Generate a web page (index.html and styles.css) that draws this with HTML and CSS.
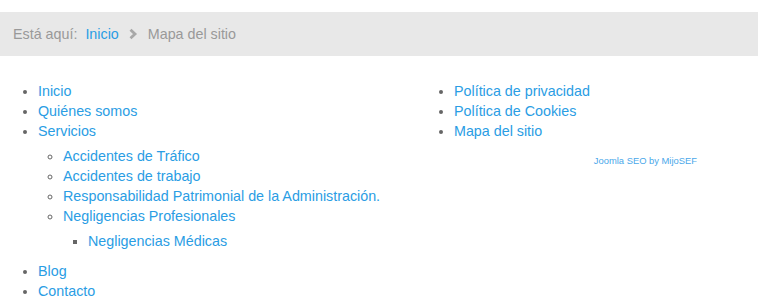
FILE: index.html
```html
<!DOCTYPE html>
<html lang="es">
<head>
<meta charset="utf-8">
<title>Mapa del sitio</title>
<link rel="stylesheet" href="styles.css">
</head>
<body>
<div class="breadcrumb">
  <span class="label">Está aquí:</span>
  <a class="link" href="#">Inicio</a>
  <svg class="chev" width="10" height="12" viewBox="0 0 10 12"><path d="M2.5 1.8 L7 6 L2.5 10.2" fill="none" stroke="#a8a8a8" stroke-width="2.8"/></svg>
  <span class="current">Mapa del sitio</span>
</div>
<div class="sitemap">
  <div class="col col-left">
    <ul class="lvl1">
      <li><a href="#">Inicio</a></li>
      <li><a href="#">Quiénes somos</a></li>
      <li><a href="#">Servicios</a>
        <ul class="lvl2">
          <li><a href="#">Accidentes de Tráfico</a></li>
          <li><a href="#">Accidentes de trabajo</a></li>
          <li><a href="#">Responsabilidad Patrimonial de la Administración.</a></li>
          <li><a href="#">Negligencias Profesionales</a>
            <ul class="lvl3">
              <li><a href="#">Negligencias Médicas</a></li>
            </ul>
          </li>
        </ul>
      </li>
      <li><a href="#">Blog</a></li>
      <li><a href="#">Contacto</a></li>
    </ul>
  </div>
  <div class="col col-right">
    <ul class="lvl1">
      <li><a href="#">Política de privacidad</a></li>
      <li><a href="#">Política de Cookies</a></li>
      <li><a href="#">Mapa del sitio</a></li>
    </ul>
    <div class="credit"><a href="#">Joomla SEO by MijoSEF</a></div>
  </div>
</div>
</body>
</html>
```
FILE: styles.css
```css
html, body {
  margin: 0;
  padding: 0;
  background: #fff;
}
body {
  font-family: "Liberation Sans", Arial, sans-serif;
  font-size: 14.3px;
  line-height: 20px;
  color: #666;
  padding-top: 12px;
}
a {
  color: #2a9de4;
  text-decoration: none;
}
.breadcrumb {
  background: #e8e8e8;
  height: 44px;
  display: flex;
  align-items: center;
  padding-left: 13px;
  color: #999;
}
.breadcrumb .label {
  margin-right: 8px;
}
.breadcrumb .chev {
  margin: 0 10px 0 9px;
}
.sitemap {
  display: flex;
  padding: 25px 0 0 13px;
}
.col-left {
  width: 416px;
}
.col-right {
  width: 268px;
}
ul {
  margin: 0;
  padding-left: 25px;
}
ul.lvl1 { list-style: disc; }
ul.lvl2 { list-style: circle; padding-top: 5px; padding-bottom: 5px; }
ul.lvl3 { list-style: square; padding-top: 5px; padding-bottom: 5px; }
li::marker { color: #666; }
.credit {
  text-align: right;
  font-size: 9.4px;
  line-height: 14px;
  margin-top: 13px;
}
.credit a {
  color: #4aa8ea;
}
```
